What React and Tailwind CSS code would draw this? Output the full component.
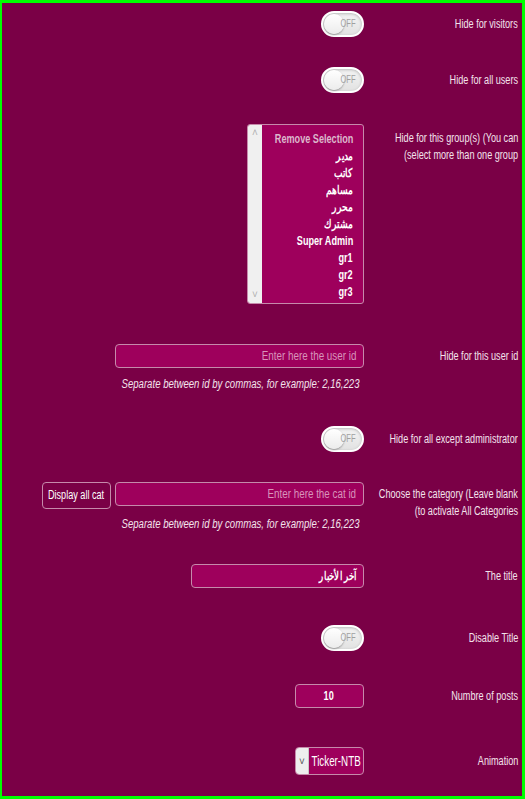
import React from "react";

const font = { fontFamily: '"Liberation Sans", Arial, sans-serif' };

function N({ children, o = "origin-right", s = "scale-x-[0.76]", className = "" }) {
  return <span className={"inline-block whitespace-nowrap " + s + " " + o + " " + className}>{children}</span>;
}

function Toggle() {
  return (
    <div className="relative w-[43px] h-[26px] rounded-full border-2 border-white bg-gradient-to-b from-[#f4f4f4] to-[#e2e2e2] shadow-[inset_0_1px_3px_rgba(0,0,0,0.25)]">
      <div className="absolute left-[1px] top-[1px] w-[20px] h-[20px] rounded-full bg-gradient-to-b from-white to-[#ececec] shadow-[0_1px_2px_rgba(0,0,0,0.35)]" />
      <span className="absolute right-[4px] top-[4px] text-[10px] leading-[14px] text-[#a0a0a0]">
        <N o="origin-center">OFF</N>
      </span>
    </div>
  );
}

function Label({ lines, className = "" }) {
  return (
    <div className={"w-[144px] flex flex-col items-end text-[12px] leading-[17px] text-[#f3e3ec] " + className}>
      {lines.map((l) => (
        <N key={l}>{l}</N>
      ))}
    </div>
  );
}

function Row({ children, label, className = "" }) {
  return (
    <div className={"flex justify-end items-center " + className}>
      <div className="flex flex-col items-end">{children}</div>
      <Label className="ml-[10px]" lines={[label]} />
    </div>
  );
}

const inputCls =
  "h-[24px] flex items-center rounded-[4px] border border-[#c68aab] bg-[#9e005c] pl-[6px] pr-[7px] text-[12px] leading-[22px]";

export default function App() {
  const groups = ["مدير", "كاتب", "مساهم", "محرر", "مشترك", "Super Admin", "gr1", "gr2", "gr3"];
  return (
    <div
      style={font}
      className="w-[525px] h-[799px] overflow-hidden bg-[#7a0046] border-[#00ff00] border-t-[3px] border-r-[3px] border-b-[3px] border-l-[2px] pr-[4px] flex flex-col"
    >
      <Row className="mt-[8px]" label="Hide for visitors">
        <Toggle />
      </Row>
      <Row className="mt-[30px]" label="Hide for all users">
        <Toggle />
      </Row>

      <div className="flex justify-end items-start mt-[31px]">
        <div className="w-[117px] h-[180px] rounded-[3px] border border-[#c68aab] bg-[#9e005c] flex overflow-hidden">
          <div className="w-[14px] shrink-0 bg-[#f0f0f0] flex flex-col justify-between items-center text-[#b0b0b0] text-[10px] leading-[10px] py-[3px]">
            <span>˄</span>
            <span>˅</span>
          </div>
          <div className="flex-1 min-w-0 flex flex-col items-end pr-[10px] pt-[6px] font-bold text-[12px] leading-[17px] text-white">
            <N className="text-[#dcb7cc]">Remove Selection</N>
            {groups.map((g) => (
              <N key={g}>{g}</N>
            ))}
          </div>
        </div>
        <Label
          className="ml-[10px] mt-[6px]"
          lines={["Hide for this group(s) (You can", "(select more than one group"]}
        />
      </div>

      <div className="flex justify-end items-start mt-[40px]">
        <div className="flex flex-col items-end">
          <div className={inputCls + " w-[249px] justify-end text-[#d894bb]"}>
            <N s="scale-x-[0.82]">Enter here the user id</N>
          </div>
          <div className="mt-[8px] mr-[4px] italic text-[12px] leading-[17px] text-[#f3e3ec] flex justify-end">
            <N s="scale-x-[0.8]">Separate between id by commas, for example: 2,16,223</N>
          </div>
        </div>
        <Label className="ml-[10px] mt-[4px]" lines={["Hide for this user id"]} />
      </div>

      <Row className="mt-[33px]" label="Hide for all except administrator">
        <Toggle />
      </Row>

      <div className="flex justify-end items-start mt-[30px]">
        <div className="flex flex-col items-end">
          <div className="flex items-start gap-[4px]">
            <div className="h-[27px] w-[69px] rounded-[4px] border border-[#c68aab] bg-[#7a0046] text-white text-[12px] leading-[25px] flex justify-center">
              <N o="origin-center">Display all cat</N>
            </div>
            <div className={inputCls + " w-[249px] justify-end text-[#d894bb]"}>
              <N s="scale-x-[0.82]">Enter here the cat id</N>
            </div>
          </div>
          <div className="mt-[7px] mr-[4px] italic text-[12px] leading-[17px] text-[#f3e3ec] flex justify-end">
            <N s="scale-x-[0.8]">Separate between id by commas, for example: 2,16,223</N>
          </div>
        </div>
        <Label
          className="ml-[10px] mt-[4px]"
          lines={["Choose the category (Leave blank", "(to activate All Categories"]}
        />
      </div>

      <Row className="mt-[31px]" label="The title">
        <div className={inputCls + " w-[173px] justify-end text-white font-bold text-[12px]"}>
          <N s="scale-x-[0.72]">آخر الأخبار</N>
        </div>
      </Row>

      <Row className="mt-[37px]" label="Disable Title">
        <Toggle />
      </Row>

      <Row className="mt-[33px]" label="Numbre of posts">
        <div className={inputCls + " w-[69px] justify-center text-white font-bold"}>
          <N o="origin-center">10</N>
        </div>
      </Row>

      <Row className="mt-[39px]" label="Animation">
        <div className="h-[28px] w-[69px] rounded-[4px] border border-[#c68aab] bg-[#9e005c] flex overflow-hidden">
          <div className="w-[13px] shrink-0 bg-[#eeeeee] border-r border-[#c8c8c8] flex items-center justify-center text-[#555] text-[10px]">˅</div>
          <div className="flex-1 min-w-0 flex justify-center text-white text-[14px] leading-[26px]">
            <N o="origin-center" s="scale-x-[0.7]">Ticker-NTB</N>
          </div>
        </div>
      </Row>
    </div>
  );
}
